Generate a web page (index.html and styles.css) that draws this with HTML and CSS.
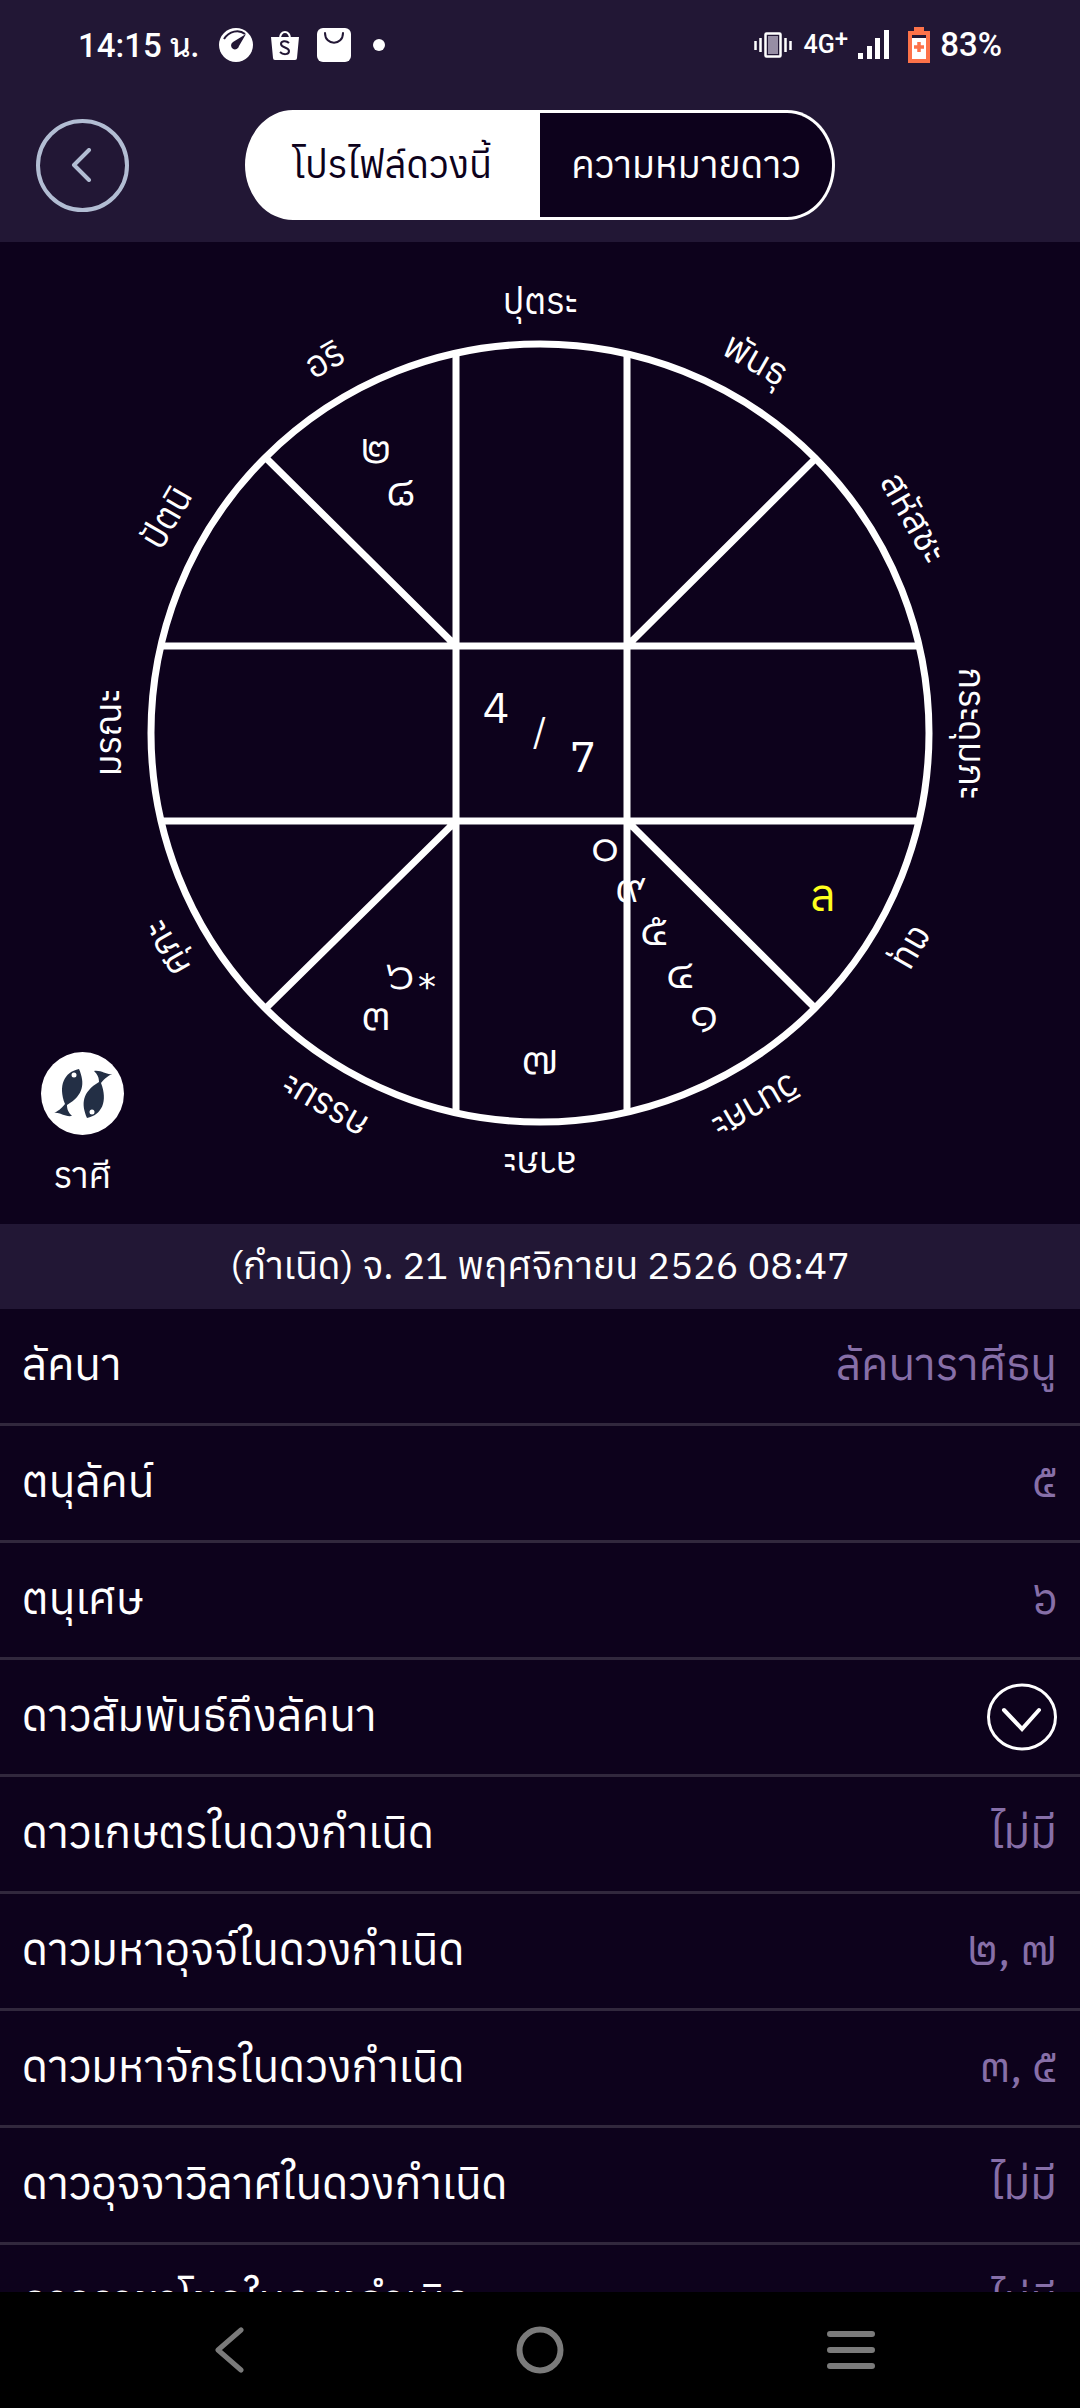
FILE: index.html
```
<!DOCTYPE html>
<html lang="th">
<head>
<meta charset="utf-8">
<meta name="viewport" content="width=device-width, initial-scale=1">
<title>โปรไฟล์ดวงนี้</title>
<link rel="stylesheet" href="styles.css">
</head>
<body>
<div class="app">
  <header class="top">
    <div class="status">
      <div class="status-group">
        <span class="clock">14:15 <span class="clock-unit">น.</span></span>
        <svg class="ic-gauge" width="34" height="34" viewBox="0 0 34 34" aria-hidden="true"><circle cx="17" cy="17" r="17" fill="#fff"/><path d="M5 11C10 3 20 1 26 6" fill="none" stroke="#221735" stroke-width="2"/><path d="M27 6 20 18a4 4 0 1 1-6-4z" fill="#221735"/></svg>
        <svg class="ic-bag" width="28" height="30" viewBox="0 0 28 30" aria-hidden="true"><path d="M9 8a5 6 0 0 1 10 0" fill="none" stroke="#fff" stroke-width="2"/><path d="M0 7h28l-2 21a2 2 0 0 1-2 2H4a2 2 0 0 1-2-2z" fill="#fff"/><path d="M18 13c-3-3-8-2-8 1 0 4 8 3 8 7 0 4-6 4-9 1" fill="none" stroke="#221735" stroke-width="2"/></svg>
        <svg class="ic-store" width="34" height="34" viewBox="0 0 34 34" aria-hidden="true"><rect width="34" height="34" rx="6" fill="#fff"/><path d="M8 5c0 13 18 13 18 0" fill="none" stroke="#221735" stroke-width="2" stroke-linecap="round"/></svg>
        <svg class="ic-dot" width="12" height="12" viewBox="0 0 12 12" aria-hidden="true"><circle cx="6" cy="6" r="6" fill="#fff"/></svg>
      </div>
      <div class="status-group">
        <svg class="ic-vibrate" width="38" height="26" viewBox="0 0 38 26" aria-hidden="true"><rect x="11.500" y="1.500" width="15" height="23" rx="1" fill="none" stroke="#fff" stroke-width="2.500"/><rect x="14" y="4" width="10" height="18" fill="#978ea5"/><path d="M1.500 9v9M6.500 6v14M31.500 6v14M36.500 9v9" stroke="#fff" stroke-width="2.500"/></svg>
        <span class="net">4G<sup>+</sup></span>
        <svg class="ic-signal" width="32" height="30" viewBox="0 0 32 30" aria-hidden="true"><path d="M0 23h5v6H0zM9 16h5v13H9zM17 8h5v21h-5zM26 0h5v29h-5z" fill="#fff"/></svg>
        <svg class="ic-battery" width="22" height="36" viewBox="0 0 22 36" aria-hidden="true"><path d="M6 0h10v4h6v32H0V4h6z" fill="#fd7249"/><rect x="4" y="8" width="14" height="3" fill="#221735"/><rect x="4" y="11" width="14" height="21" fill="#fff"/><path d="M11 15v10M6 20h10" stroke="#fd7249" stroke-width="3.500"/></svg>
        <span class="percent">83%</span>
      </div>
    </div>
    <div class="bar">
      <button class="back" type="button" aria-label="กลับ"><svg width="24" height="34" viewBox="0 0 24 34" aria-hidden="true"><path d="M18 2 3 17l15 15" fill="none" stroke="#b2bdd3" stroke-width="4" stroke-linecap="round" stroke-linejoin="round"/></svg></button>
      <div class="tabs" role="tablist">
        <button class="tab tab-on" type="button" role="tab" aria-selected="true">โปรไฟล์ดวงนี้</button>
        <button class="tab" type="button" role="tab" aria-selected="false">ความหมายดาว</button>
      </div>
    </div>
  </header>

  <section class="chart">
    <svg class="wheel" viewBox="0 0 1080 982" role="img" aria-label="ผังดวงชะตา">
      <g class="wheel-lines">
        <circle cx="540" cy="491" r="389"/>
        <path d="M456 110V872M627 110V872M160 404H920M160 579H920M266 216 456 404M816 216 627 404M266 766 456 579M815 766 627 579"/>
      </g>
      <g class="houses">
        <text x="540" y="72">ปุตระ</text>
        <text x="540" y="72" transform="rotate(30 540 491)">พันธุ</text>
        <text x="540" y="72" transform="rotate(60 540 491)">สหัสชะ</text>
        <text x="540" y="72" transform="rotate(90 540 491)">กระดุมภะ</text>
        <text x="540" y="72" transform="rotate(120 540 491)">ตนุ</text>
        <text x="540" y="72" transform="rotate(150 540 491)">วินาศะ</text>
        <text x="540" y="72" transform="rotate(180 540 491)">ลาภะ</text>
        <text x="540" y="72" transform="rotate(210 540 491)">กรรมะ</text>
        <text x="540" y="72" transform="rotate(240 540 491)">ศุภะ</text>
        <text x="540" y="72" transform="rotate(270 540 491)">มรณะ</text>
        <text x="540" y="72" transform="rotate(300 540 491)">ปัตนิ</text>
        <text x="540" y="72" transform="rotate(330 540 491)">อริ</text>
      </g>
      <g class="planets">
        <text x="376" y="221">๒</text>
        <text x="401" y="263">๘</text>
        <text x="400" y="747">๖</text>
        <text x="427" y="757" class="star">*</text>
        <text x="376" y="788">๓</text>
        <text x="540" y="832">๗</text>
        <text x="605" y="619">๐</text>
        <text x="631" y="660">๙</text>
        <text x="654" y="703">๕</text>
        <text x="680" y="746">๔</text>
        <text x="704" y="787">๑</text>
      </g>
      <g class="centre">
        <text x="496" y="481">4</text>
        <text x="540" y="502" class="slash">/</text>
        <text x="583" y="530">7</text>
        <text x="823" y="669" class="lagna">ล</text>
      </g>
    </svg>
    <button class="zodiac" type="button">
      <svg width="83" height="83" viewBox="0 0 83 83" aria-hidden="true"><circle cx="41.500" cy="41.500" r="41.500" fill="#fff"/><g id="fish"><path d="M38 17C23 20 17 34 24 52 20 57 17 59 13 61c6-1 10 4 18 3-4-4-5-7-5-11C43 43 44 31 38 17z" fill="#232f45"/><circle cx="33" cy="23" r="2.500" fill="#fff"/></g><use href="#fish" transform="rotate(180 42 41.500)"/></svg>
      <span>ราศี</span>
    </button>
  </section>

  <h1 class="birth">(กำเนิด) จ. 21 พฤศจิกายน 2526 08:47</h1>

  <dl class="facts">
    <div class="fact"><dt>ลัคนา</dt><dd>ลัคนาราศีธนู</dd></div>
    <div class="fact"><dt>ตนุลัคน์</dt><dd>๕</dd></div>
    <div class="fact"><dt>ตนุเศษ</dt><dd>๖</dd></div>
    <div class="fact"><dt>ดาวสัมพันธ์ถึงลัคนา</dt><dd><button class="expand" type="button" aria-label="แสดงเพิ่มเติม"><svg width="70" height="68" viewBox="0 0 70 68" aria-hidden="true"><ellipse cx="35" cy="34" rx="33.500" ry="32" fill="none" stroke="#fff" stroke-width="3"/><path d="M17 27 35 46 52 27" fill="none" stroke="#fff" stroke-width="4" stroke-linecap="round"/></svg></button></dd></div>
    <div class="fact"><dt>ดาวเกษตรในดวงกำเนิด</dt><dd>ไม่มี</dd></div>
    <div class="fact"><dt>ดาวมหาอุจจ์ในดวงกำเนิด</dt><dd>๒, ๗</dd></div>
    <div class="fact"><dt>ดาวมหาจักรในดวงกำเนิด</dt><dd>๓, ๕</dd></div>
    <div class="fact"><dt>ดาวอุจจาวิลาศในดวงกำเนิด</dt><dd>ไม่มี</dd></div>
    <div class="fact"><dt>ดาวราชาโชคในดวงกำเนิด</dt><dd>ไม่มี</dd></div>
  </dl>

  <nav class="nav">
    <button type="button" aria-label="ย้อนกลับ"><svg width="32" height="46" viewBox="0 0 32 46" aria-hidden="true"><path d="M28 3 5 23l23 20" fill="none" stroke="#7b7b7b" stroke-width="5" stroke-linecap="round" stroke-linejoin="round"/></svg></button>
    <button type="button" aria-label="หน้าหลัก"><svg width="48" height="48" viewBox="0 0 48 48" aria-hidden="true"><circle cx="24" cy="24" r="20.500" fill="none" stroke="#7b7b7b" stroke-width="6"/></svg></button>
    <button type="button" aria-label="แอปล่าสุด"><svg width="48" height="38" viewBox="0 0 48 38" aria-hidden="true"><path d="M3 3h42M3 19h42M3 35h42" stroke="#7b7b7b" stroke-width="6" stroke-linecap="round"/></svg></button>
  </nav>
</div>
</body>
</html>
```
FILE: styles.css
```
* { box-sizing: border-box; }

body {
  margin: 0;
  background: #0d021c;
  color: #fff;
  font-family: Anuphan, "Noto Sans Thai", "Noto Sans", sans-serif;
}

button {
  margin: 0;
  padding: 0;
  border: 0;
  background: none;
  color: inherit;
  font: inherit;
}

svg { display: block; }

.app {
  display: flex;
  flex-direction: column;
  height: 100vh;
}

.top {
  flex: none;
  background: #221735;
  padding-bottom: 22px;
}

/* Status bar */
.status {
  display: flex;
  justify-content: space-between;
  height: 90px;
  padding: 0 78px;
}

.status-group {
  display: flex;
  align-items: center;
}

.clock,
.percent {
  font: 500 33px/40px Roboto, sans-serif;
}

.clock-unit {
  font-family: Sarabun, "Noto Sans Thai Looped", sans-serif;
  font-size: 32px;
}

.ic-gauge { margin-left: 20px; }
.ic-bag { margin-left: 18px; }
.ic-store { margin-left: 18px; }
.ic-dot { margin-left: 22px; }
.ic-signal { margin-left: 10px; }
.ic-battery { margin-left: 18px; }
.percent { margin-left: 10px; }

.net {
  margin-left: 12px;
  font: 500 25px/32px Roboto, sans-serif;
}

.net sup {
  font-size: 24px;
  line-height: 0;
  vertical-align: 6px;
}

/* Title bar */
.bar {
  display: grid;
  grid-template-columns: 1fr auto 1fr;
  align-items: center;
  margin-top: 20px;
  padding: 0 36px;
}

.back {
  display: grid;
  place-items: center;
  width: 93px;
  height: 93px;
  border: 4px solid #b2bdd3;
  border-radius: 50%;
}

.tabs {
  display: grid;
  grid-template-columns: 1fr 1fr;
  width: 590px;
}

.tab {
  height: 110px;
  padding: 0 0 3px;
  border: 3px solid #fff;
  border-left: 0;
  border-radius: 0 48px 48px 0 / 0 55px 55px 0;
  background: #0d021c;
  font-size: 38px;
  line-height: 56px;
}

.tab-on {
  border: 3px solid #fff;
  border-radius: 48px 0 0 48px / 55px 0 0 55px;
  background: #fff;
  color: #0d021c;
}

/* Chart */
.chart {
  position: relative;
  flex: none;
}

.wheel { width: 100%; }

.wheel-lines {
  fill: none;
  stroke: #fff;
  stroke-width: 7;
}

.houses,
.planets,
.centre {
  fill: #fff;
  text-anchor: middle;
}

.houses { font-size: 36px; }

.planets {
  font-family: Prompt, Kanit, "Noto Sans Thai", sans-serif;
  font-size: 44px;
  font-weight: 300;
}

.planets .star {
  font-family: "DejaVu Sans", sans-serif;
  font-size: 36px;
  font-weight: 400;
}

.centre { font-size: 44px; }
.centre .slash { font-size: 36px; }
.centre .lagna { fill: #ffff1e; }

.zodiac {
  position: absolute;
  left: 41px;
  bottom: 24px;
  display: grid;
  justify-items: center;
  gap: 15px;
  font-size: 36px;
  line-height: 50px;
}

.birth {
  flex: none;
  margin: 0;
  padding: 12px 20px 16px;
  background: #221735;
  font-size: 38px;
  font-weight: 400;
  line-height: 57px;
  text-align: center;
}

/* Readings */
.facts {
  flex: 1;
  min-height: 0;
  margin: 0;
  overflow-y: auto;
  scrollbar-width: none;
}

.fact {
  display: flex;
  align-items: center;
  justify-content: space-between;
  height: 117px;
  padding: 0 23px 4px 22px;
  border-bottom: 3px solid #31283d;
  font-size: 44px;
  line-height: 64px;
}

.fact dd {
  margin: 0;
  color: #876fa8;
}

.expand {
  display: block;
  margin-top: 4px;
}

/* System navigation */
.nav {
  flex: none;
  display: grid;
  grid-template-columns: repeat(3, 1fr);
  height: 116px;
  padding: 0 73px;
  background: #000;
}

.nav button {
  display: grid;
  place-items: center;
}
```
